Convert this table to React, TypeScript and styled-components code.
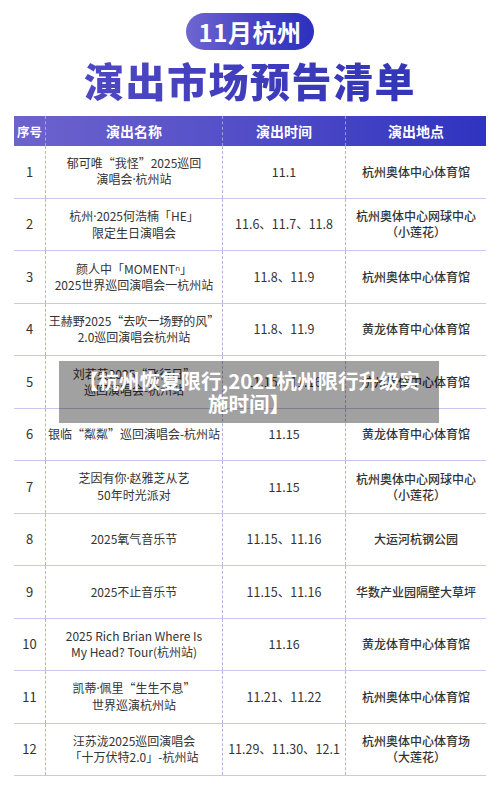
import React from "react";
import styled, { createGlobalStyle } from "styled-components";

const GlobalStyle = createGlobalStyle`
  html, body {
    margin: 0;
    padding: 0;
    background: #ffffff;
  }
  body {
    font-family: "Noto Sans CJK SC", "Noto Sans", sans-serif;
  }
`;

type Show = {
  name: string[];
  date: string;
  venue: string[];
};

const shows: Show[] = [
  { name: ["郁可唯“我怪”2025巡回", "演唱会·杭州站"], date: "11.1", venue: ["杭州奥体中心体育馆"] },
  { name: ["杭州·2025何浩楠「HE」", "限定生日演唱会"], date: "11.6、11.7、11.8", venue: ["杭州奥体中心网球中心", "（小莲花）"] },
  { name: ["颜人中「MOMENTⁿ」", "2025世界巡回演唱会一杭州站"], date: "11.8、11.9", venue: ["杭州奥体中心体育馆"] },
  { name: ["王赫野2025“去吹一场野的风”", "2.0巡回演唱会杭州站"], date: "11.8、11.9", venue: ["黄龙体育中心体育馆"] },
  { name: ["刘若英2025“飞行日”", "巡回演唱会-杭州站"], date: "11.15、11.16", venue: ["杭州奥体中心体育馆"] },
  { name: ["银临“粼粼”巡回演唱会-杭州站"], date: "11.15", venue: ["黄龙体育中心体育馆"] },
  { name: ["芝因有你·赵雅芝从艺", "50年时光派对"], date: "11.15", venue: ["杭州奥体中心网球中心", "（小莲花）"] },
  { name: ["2025氧气音乐节"], date: "11.15、11.16", venue: ["大运河杭钢公园"] },
  { name: ["2025不止音乐节"], date: "11.15、11.16", venue: ["华数产业园隔壁大草坪"] },
  { name: ["2025 Rich Brian Where Is", "My Head? Tour(杭州站)"], date: "11.16", venue: ["黄龙体育中心体育馆"] },
  { name: ["凯蒂·佩里“生生不息”", "世界巡演杭州站"], date: "11.21、11.22", venue: ["杭州奥体中心体育馆"] },
  { name: ["汪苏泷2025巡回演唱会", "「十万伏特2.0」-杭州站"], date: "11.29、11.30、12.1", venue: ["杭州奥体中心体育场", "（大莲花）"] },
];

const Page = styled.div`
  position: relative;
  width: 500px;
  height: 786px;
  overflow: hidden;
  background: #ffffff;
`;

const Heading = styled.header`
  display: flex;
  flex-direction: column;
  align-items: center;
  padding-top: 13px;
`;

const Pill = styled.div`
  display: flex;
  align-items: center;
  justify-content: center;
  height: 37px;
  padding: 0 13px;
  border-radius: 19px;
  background: linear-gradient(90deg, #6f66d0 0%, #4a45c6 50%, #2c30bd 100%);
  color: #ffffff;
  font-size: 24px;
  font-weight: 700;
  letter-spacing: 0.5px;
`;

const Title = styled.h1`
  margin: 8px 0 0;
  height: 44px;
  line-height: 44px;
  font-size: 40px;
  font-weight: 900;
  letter-spacing: 1.5px;
  background: linear-gradient(90deg, #4f48c4 0%, #3d3bb9 60%, #3236b8 100%);
  -webkit-background-clip: text;
  background-clip: text;
  color: transparent;
`;

const Table = styled.div`
  margin: 14px 14px 0;
  display: flex;
  flex-direction: column;
`;

const columns = "31px 177px 123px 141px";

const HeadRow = styled.div`
  display: grid;
  grid-template-columns: ${columns};
  height: 30px;
  background: linear-gradient(90deg, #6d63cd 0%, #5550c8 45%, #2f33bf 100%);
`;

const HeadCell = styled.div<{ $first?: boolean; $small?: boolean }>`
  display: flex;
  align-items: center;
  justify-content: center;
  color: #ffffff;
  font-size: ${(p) => (p.$small ? "12.5px" : "14px")};
  font-weight: 700;
  border-left: ${(p) => (p.$first ? "none" : "1px dashed rgba(255, 255, 255, 0.45)")};
`;

const Row = styled.div`
  display: grid;
  grid-template-columns: ${columns};
  box-sizing: border-box;
  height: 52.5px;
  border-bottom: 1.5px solid #c9c7ec;
`;

const Cell = styled.div<{ $first?: boolean; $strong?: boolean; $size?: number }>`
  display: flex;
  flex-direction: column;
  align-items: center;
  justify-content: center;
  text-align: center;
  color: #333333;
  font-size: ${(p) => p.$size ?? 12}px;
  line-height: 16px;
  font-weight: ${(p) => (p.$strong ? 500 : 400)};
  white-space: nowrap;
  border-left: ${(p) => (p.$first ? "none" : "1px dashed #b3b0e2")};
`;

// narrow middle dot, as in the reference (the CJK font makes it full width)
const Dot = styled.span`
  font-family: "Noto Sans", sans-serif;
`;

const Line = ({ text }: { text: string }) => {
  const parts = text.split("·");
  return (
    <span>
      {parts.map((part, i) => (
        <React.Fragment key={i}>
          {i > 0 && <Dot>·</Dot>}
          {part}
        </React.Fragment>
      ))}
    </span>
  );
};

const Overlay = styled.div`
  position: absolute;
  left: 59px;
  top: 361px;
  width: 380px;
  height: 62px;
  box-sizing: border-box;
  padding: 8px 18px;
  background: rgba(0, 0, 0, 0.37);
  color: #ffffff;
  font-size: 20.5px;
  line-height: 23px;
  font-weight: 700;
  text-align: center;
`;

export default function App() {
  return (
    <Page>
      <GlobalStyle />
      <Heading>
        <Pill>11月杭州</Pill>
        <Title>演出市场预告清单</Title>
      </Heading>
      <Table>
        <HeadRow>
          <HeadCell $first $small>序号</HeadCell>
          <HeadCell>演出名称</HeadCell>
          <HeadCell>演出时间</HeadCell>
          <HeadCell>演出地点</HeadCell>
        </HeadRow>
        {shows.map((show, idx) => (
          <Row key={idx}>
            <Cell $first $size={13}>{idx + 1}</Cell>
            <Cell>
              {show.name.map((line, i) => (
                <Line key={i} text={line} />
              ))}
            </Cell>
            <Cell $size={12.5}>{show.date}</Cell>
            <Cell $strong>
              {show.venue.map((line, i) => (
                <span key={i}>{line}</span>
              ))}
            </Cell>
          </Row>
        ))}
      </Table>
      <Overlay>【杭州恢复限行,2021杭州限行升级实施时间】</Overlay>
    </Page>
  );
}
